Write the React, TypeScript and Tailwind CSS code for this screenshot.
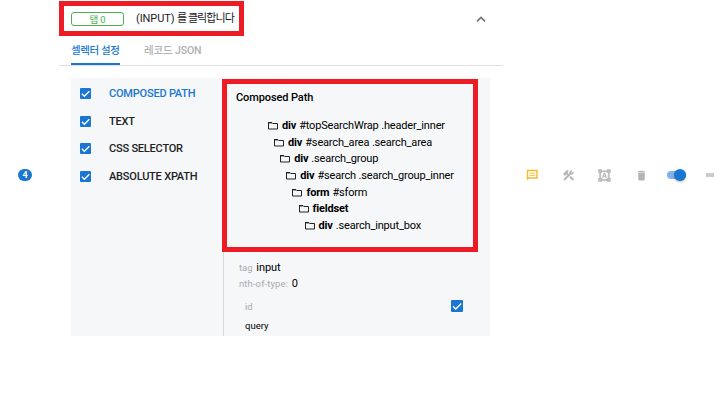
import { MdConstruction, MdDelete, MdFormatShapes } from 'react-icons/md';

const selectors = ['COMPOSED PATH', 'TEXT', 'CSS SELECTOR', 'ABSOLUTE XPATH'];

const path = [
  { tag: 'div', rest: '#topSearchWrap .header_inner' },
  { tag: 'div', rest: '#search_area .search_area' },
  { tag: 'div', rest: '.search_group' },
  { tag: 'div', rest: '#search .search_group_inner' },
  { tag: 'form', rest: '#sform' },
  { tag: 'fieldset', rest: '' },
  { tag: 'div', rest: '.search_input_box' },
];

function Check({ large = false }: { large?: boolean }) {
  return (
    <span className={`flex shrink-0 items-center justify-center rounded-[1px] bg-[#1976d2] ${large ? 'size-3' : 'size-[11px]'}`}>
      <svg viewBox="0 0 24 24" className="size-full" fill="none" stroke="#fff" strokeWidth="2.8">
        <path d="M4 12.5 9.5 18 20.5 7" />
      </svg>
    </span>
  );
}

function Folder() {
  return (
    <svg viewBox="0 0 10 8" className="mr-[4px] h-2 w-[10px] shrink-0" fill="none" stroke="#222">
      <path d="M.5 .5V7H9.5V1.5H4.5" />
      <path d="M0 .7H4.2" strokeWidth="1.4" />
    </svg>
  );
}

function Message() {
  return (
    <svg viewBox="0 0 12 12" className="size-3 shrink-0" fill="none" stroke="#f5bd2e">
      <path d="M1.5 10V1.5H11V9H2.5" strokeWidth="1.4" />
      <path d="M.8 11.5V8H4.4Z" fill="#f5bd2e" stroke="none" />
      <path d="M3.4 4.2H9.2M3.4 6.4H9.2" strokeWidth="0.9" />
    </svg>
  );
}

function Header() {
  return (
    <header className="flex h-[37px] items-start justify-between">
      <div className="mt-px flex h-[35px] w-[185px] items-center border-[5px] border-[#ed1c24] pl-[7px]">
        <span className="mt-px flex h-[14px] w-[53px] items-center justify-center rounded-[3px] border border-[#4caf50] pt-px text-[9.5px] leading-none tracking-[-0.2px] text-[#4caf50]">
          탭 0
        </span>
        <span className="ml-[12px] mt-[2px] whitespace-nowrap text-[11px] tracking-[-0.1px] text-[#222]">
          (INPUT) <span className="tracking-[-0.95px]">를 클릭합니다</span>
        </span>
      </div>
      <svg viewBox="0 0 16 16" className="mr-[14px] mt-[11px] size-4" fill="none" stroke="#777" strokeWidth="1.8">
        <path d="M4 10.4 8 6.4 12 10.4" />
      </svg>
    </header>
  );
}

function Tabs() {
  return (
    <nav className="flex h-[29px] border-b border-[#e0e0e0] text-[10.5px] font-medium">
      <span className="ml-3 h-[28px] w-[49px] whitespace-nowrap border-b-2 border-[#1976d2] pt-[6px] leading-4 tracking-[-0.4px] text-[#1976d2]">셀렉터 설정</span>
      <span className="ml-6 whitespace-nowrap pt-[6px] leading-4 tracking-[-0.15px] text-[#b0b0b0]">레코드 JSON</span>
    </nav>
  );
}

function Toolbar() {
  return (
    <aside className="flex h-4 items-center pl-[23px] text-[#b4b4b4]">
      <Message />
      <MdConstruction className="ml-[24px] size-[13px] shrink-0 [&_path:not([fill=none])]:stroke-current [&_path:not([fill=none])]:stroke-[0.8px]" />
      <MdFormatShapes className="ml-[23px] size-[13px] shrink-0 [&_path:not([fill=none])]:stroke-current [&_path:not([fill=none])]:stroke-[0.8px]" />
      <MdDelete className="ml-[24px] size-[13px] shrink-0" />
      <span className="ml-[19px] flex h-2 w-[19px] shrink-0 items-center justify-end rounded-full bg-[#82b3e6]">
        <span className="size-3 shrink-0 rounded-full bg-[#1976d2] shadow-[0_1px_2px_rgba(0,0,0,0.3)]" />
      </span>
      <span className="ml-5 h-1 w-2 shrink-0 bg-[#ccc]" />
    </aside>
  );
}

export default function App() {
  return (
    <main className="flex h-[420px] w-[727px] overflow-hidden bg-white font-['Roboto','Noto_Sans_CJK_KR',sans-serif] text-black">
      <div className="w-[59px] shrink-0 pl-[18px] pt-[169px]">
        <span className="flex h-3 w-[14px] items-center justify-center rounded-full bg-[#1976d2] text-[9px] font-bold leading-none text-white">4</span>
      </div>
      <section className="w-[444px] shrink-0">
        <Header />
        <Tabs />
        <div className="ml-3 mt-3 flex h-[258px] w-[419px] bg-[#f5f7f9]">
          <ul className="w-[151px] shrink-0 pl-[9px] pt-[2px]">
            {selectors.map((label, index) => (
              <li key={label} className="flex h-[27.6px] items-center">
                <Check />
                <span className={`ml-[18px] text-[11px] font-medium leading-4 tracking-[-0.21px] ${index === 0 ? 'text-[#1976d2]' : 'pt-px text-[#222]'}`}>{label}</span>
              </li>
            ))}
          </ul>
          <div className="grow">
            <div className="mt-px h-[173px] w-[256px] border-[5px] border-[#ed1c24] pl-[9px] pt-[6px]">
              <h2 className="text-[11px] font-medium leading-4 tracking-[-0.1px]">Composed Path</h2>
              <ul className="ml-[32px] mt-[11.6px]">
                {path.map(({ tag, rest }, index) => (
                  <li key={index} className="flex h-[16.7px] items-center whitespace-nowrap text-[11px] leading-4 tracking-[-0.17px]" style={{ paddingLeft: index * 6.1 }}>
                    <Folder />
                    <b>{tag}</b>
                    <span className="ml-[3px]">{rest}</span>
                  </li>
                ))}
              </ul>
            </div>
            <div className="ml-px h-[84px] border-l border-[#d8dadc] pl-[15px] pt-[8px] text-[11px]">
              <p className="leading-4"><span className="text-[9.5px] text-[#aaa]">tag</span> <span className="ml-px tracking-[-0.1px]">input</span></p>
              <p className="leading-4"><span className="text-[9.5px] tracking-[0.1px] text-[#aaa]">nth-of-type:</span> <span className="ml-px">0</span></p>
              <div className="ml-[6px] mt-[6px] flex h-4 items-center justify-between pr-[27px] text-[9.5px] text-[#aaa]">
                <span className="pt-[2px]">id</span>
                <Check large />
              </div>
              <p className="ml-[6px] mt-1 text-[9.5px] leading-4">query</p>
            </div>
          </div>
        </div>
      </section>
      <div className="pt-[167px]">
        <Toolbar />
      </div>
    </main>
  );
}
